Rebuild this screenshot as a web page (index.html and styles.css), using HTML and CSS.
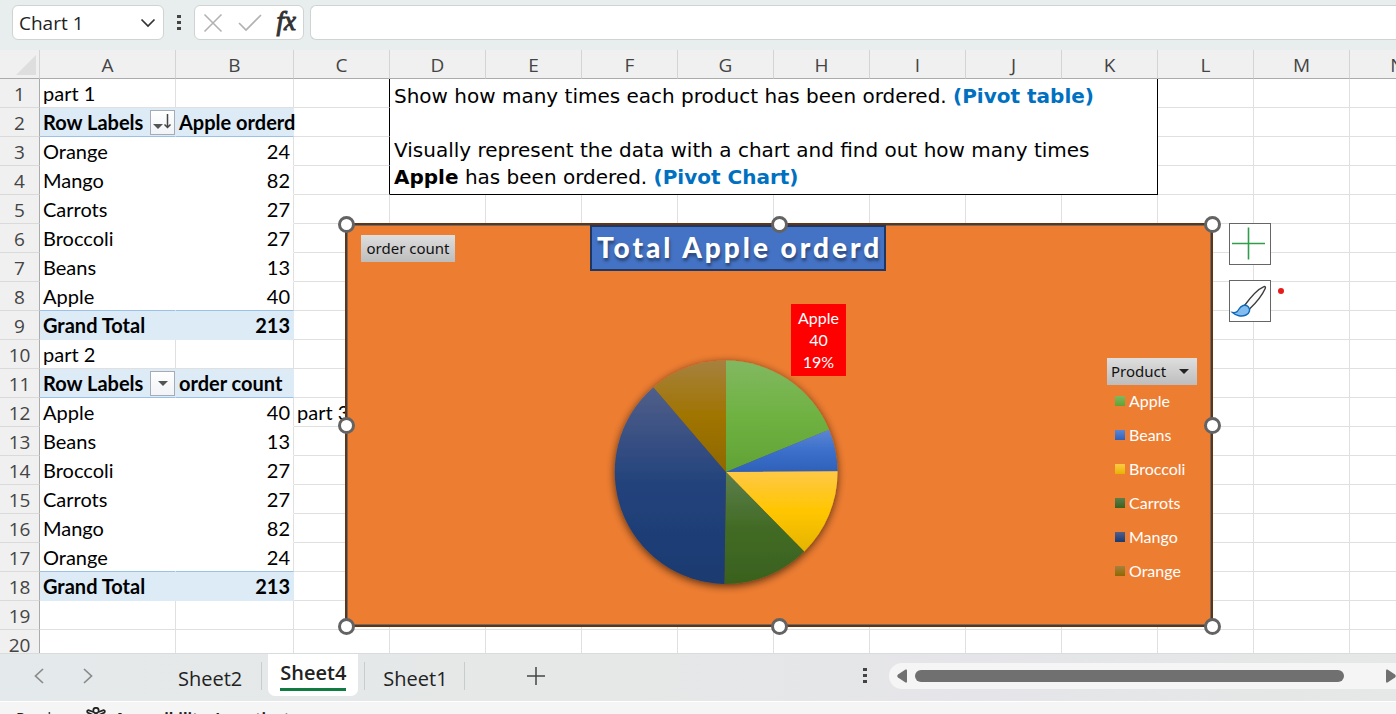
FILE: index.html
```html
<!DOCTYPE html>
<html lang="en">
<head>
<meta charset="utf-8">
<title>Sheet4</title>
<link rel="stylesheet" href="styles.css">
</head>
<body>
<header class="formula-bar">
  <button class="name-box" type="button">Chart 1
    <svg width="16" height="10" viewBox="0 0 16 10"><path d="M1.500 1.500 8 8l6.500-6.500" fill="none" stroke="#333" stroke-width="1.700"/></svg>
  </button>
  <svg class="dots" width="4" height="16" viewBox="0 0 4 16"><path d="M0 0h4v3H0zM0 6h4v3H0zM0 12h4v3H0z" fill="#444"/></svg>
  <div class="formula-tools">
    <button type="button" aria-label="Cancel"><svg width="20" height="20" viewBox="0 0 20 20"><path d="M1.500 1.500 18.500 18.500M18.500 1.500 1.500 18.500" stroke="#b2b2b2" stroke-width="1.600"/></svg></button>
    <button type="button" aria-label="Enter"><svg width="24" height="18" viewBox="0 0 24 18"><path d="m1 9 7 7L23 1" fill="none" stroke="#b2b2b2" stroke-width="1.700"/></svg></button>
    <button type="button" class="fx" aria-label="Insert function">fx</button>
  </div>
  <input class="formula-input" type="text" aria-label="Formula">
</header>

<main class="sheet">
  <table class="grid">
    <colgroup><col class="c-num"><col class="c-a"><col class="c-b"><col span="12" class="c-std"></colgroup>
    <thead>
      <tr><th class="corner"><svg width="20" height="20" viewBox="0 0 20 20"><path d="M20 0v20H0z" fill="#dedede"/></svg></th><th>A</th><th>B</th><th>C</th><th>D</th><th>E</th><th>F</th><th>G</th><th>H</th><th>I</th><th>J</th><th>K</th><th>L</th><th>M</th><th>N</th></tr>
    </thead>
    <tbody>
      <tr><th>1</th><td>part 1</td><td></td><td class="edge"></td>
        <td class="note" colspan="8" rowspan="4">Show how many times each product has been ordered. <b class="blue">(Pivot table)</b><br><br>Visually represent the data with a chart and find out how many times<br><b>Apple</b> has been ordered. <b class="blue">(Pivot Chart)</b></td>
        <td class="rest" colspan="3"></td></tr>
      <tr class="band"><th>2</th><td><div class="field">Row Labels<button type="button" aria-label="Sort and filter"><svg width="19" height="19" viewBox="0 0 19 19"><path d="M0 11h10l-5 5z" fill="#555"/><path d="M14.500 1v13M11.500 11.500l3 3 3-3" fill="none" stroke="#444" stroke-width="1.500"/></svg></button></div></td><td>Apple orderd</td><td class="edge"></td><td class="rest" colspan="3"></td></tr>
      <tr class="item"><th>3</th><td>Orange</td><td>24</td><td class="edge"></td><td class="rest" colspan="3"></td></tr>
      <tr class="item"><th>4</th><td>Mango</td><td>82</td><td class="edge"></td><td class="rest" colspan="3"></td></tr>
      <tr class="item"><th>5</th><td>Carrots</td><td>27</td><td></td><td class="rest" colspan="11"></td></tr>
      <tr class="item"><th>6</th><td>Broccoli</td><td>27</td><td></td><td class="rest" colspan="11"></td></tr>
      <tr class="item"><th>7</th><td>Beans</td><td>13</td><td></td><td class="rest" colspan="11"></td></tr>
      <tr class="item last"><th>8</th><td>Apple</td><td>40</td><td></td><td class="rest" colspan="11"></td></tr>
      <tr class="band total"><th>9</th><td>Grand Total</td><td>213</td><td></td><td class="rest" colspan="11"></td></tr>
      <tr><th>10</th><td>part 2</td><td></td><td></td><td class="rest" colspan="11"></td></tr>
      <tr class="band"><th>11</th><td><div class="field">Row Labels<button type="button" aria-label="Filter"><svg width="19" height="19" viewBox="0 0 19 19"><path d="M5 7h10l-5 5z" fill="#555"/></svg></button></div></td><td>order count</td><td></td><td class="rest" colspan="11"></td></tr>
      <tr class="item"><th>12</th><td>Apple</td><td>40</td><td>part 3</td><td class="rest" colspan="11"></td></tr>
      <tr class="item"><th>13</th><td>Beans</td><td>13</td><td></td><td class="rest" colspan="11"></td></tr>
      <tr class="item"><th>14</th><td>Broccoli</td><td>27</td><td></td><td class="rest" colspan="11"></td></tr>
      <tr class="item"><th>15</th><td>Carrots</td><td>27</td><td></td><td class="rest" colspan="11"></td></tr>
      <tr class="item"><th>16</th><td>Mango</td><td>82</td><td></td><td class="rest" colspan="11"></td></tr>
      <tr class="item last"><th>17</th><td>Orange</td><td>24</td><td></td><td class="rest" colspan="11"></td></tr>
      <tr class="band total"><th>18</th><td>Grand Total</td><td>213</td><td></td><td class="rest" colspan="11"></td></tr>
      <tr><th>19</th><td></td><td></td><td></td><td class="rest" colspan="11"></td></tr>
      <tr><th>20</th><td></td><td></td><td></td><td class="rest" colspan="11"></td></tr>
    </tbody>
  </table>

  <section class="chart" aria-label="Total Apple orderd">
    <button type="button" class="pivot-button count">order count</button>
    <h1 class="chart-title">Total Apple orderd</h1>
    <svg class="pie" width="252" height="252" viewBox="-126 -126 252 252">
      <defs>
        <linearGradient id="g1" x2="0" y2="1"><stop offset="0" stop-color="#81b861"/><stop offset=".5" stop-color="#6fb242"/><stop offset="1" stop-color="#61a235"/></linearGradient>
        <linearGradient id="g2" x2="0" y2="1"><stop offset="0" stop-color="#5d86d2"/><stop offset=".5" stop-color="#3b6fcb"/><stop offset="1" stop-color="#2e61b9"/></linearGradient>
        <linearGradient id="g3" x2="0" y2="1"><stop offset="0" stop-color="#ffc846"/><stop offset=".5" stop-color="#ffc600"/><stop offset="1" stop-color="#e5b400"/></linearGradient>
        <linearGradient id="g4" x2="0" y2="1"><stop offset="0" stop-color="#5c7e4c"/><stop offset=".5" stop-color="#426b25"/><stop offset="1" stop-color="#3a611e"/></linearGradient>
        <linearGradient id="g5" x2="0" y2="1"><stop offset="0" stop-color="#505f8a"/><stop offset=".5" stop-color="#22427c"/><stop offset="1" stop-color="#1b3a70"/></linearGradient>
        <linearGradient id="g6" x2="0" y2="1"><stop offset="0" stop-color="#a6813f"/><stop offset=".5" stop-color="#a07400"/><stop offset="1" stop-color="#8e6800"/></linearGradient>
        <filter id="sh" x="-20%" y="-20%" width="140%" height="140%"><feDropShadow dx="0" dy="2" stdDeviation="4" flood-color="#000" flood-opacity=".65"/></filter>
      </defs>
      <g filter="url(#sh)">
        <path d="M0 0V-111.500A112 112 0 0 1 103-42.300z" fill="url(#g1)"/>
        <path d="M0 0 103-42.300A112 112 0 0 1 111.500-.8z" fill="url(#g2)"/>
        <path d="M0 0 111.500-.8A112 112 0 0 1 78.200 79.500z" fill="url(#g3)"/>
        <path d="M0 0 78.200 79.500A112 112 0 0 1-1.600 112z" fill="url(#g4)"/>
        <path d="M0 0-1.600 112A112 112 0 0 1-72.500-84.700z" fill="url(#g5)"/>
        <path d="M0 0-72.500-84.700A112 112 0 0 1 0-111.500z" fill="url(#g6)"/>
      </g>
    </svg>
    <div class="data-label">Apple<br>40<br>19%</div>
    <div class="legend">
      <button type="button" class="pivot-button">Product<svg width="10" height="5" viewBox="0 0 10 5"><path d="M0 0h10L5 5z" fill="#222"/></svg></button>
      <ul>
        <li class="k1">Apple</li><li class="k2">Beans</li><li class="k3">Broccoli</li><li class="k4">Carrots</li><li class="k5">Mango</li><li class="k6">Orange</li>
      </ul>
    </div>
    <i class="handle n w"></i><i class="handle n m"></i><i class="handle n e"></i>
    <i class="handle c w"></i><i class="handle c e"></i>
    <i class="handle s w"></i><i class="handle s m"></i><i class="handle s e"></i>
  </section>

  <div class="chart-tools">
    <button type="button" aria-label="Chart elements"><svg width="40" height="40" viewBox="0 0 40 40"><path d="M2 19.500h33M18.500 3.500v32" stroke="#2f9e4b" stroke-width="1.600"/></svg></button>
    <button type="button" aria-label="Chart styles"><svg width="40" height="40" viewBox="0 0 40 40"><path d="M14.500 24.500C20 17 28 8 33.500 5.800c2-.8 2.300.6 1.600 2C32 14.500 26 22 19.500 28z" fill="#fafafa" stroke="#3b3b3b" stroke-width="1.400"/><path d="M2.500 31.500c4 .5 5-1 6.500-3.500 2-3.500 6-5 9-2.500 3 3 1.500 7-2 8.500-4.500 2-10 .8-13.500-2.500z" fill="#83bdf0" stroke="#1068b8" stroke-width="1.400"/></svg></button>
    <i class="badge"></i>
  </div>
</main>

<nav class="tabs">
  <button type="button" class="step" aria-label="Previous sheet"><svg width="10" height="16" viewBox="0 0 10 16"><path d="M9 1 1.500 8 9 15" fill="none" stroke="#8a8a8a" stroke-width="1.700"/></svg></button>
  <button type="button" class="step" aria-label="Next sheet"><svg width="10" height="16" viewBox="0 0 10 16"><path d="m1 1 7.500 7L1 15" fill="none" stroke="#8a8a8a" stroke-width="1.700"/></svg></button>
  <button type="button" class="tab first">Sheet2</button>
  <button type="button" class="tab active"><span>Sheet4</span></button>
  <button type="button" class="tab last">Sheet1</button>
  <button type="button" class="add" aria-label="New sheet"><svg width="18" height="18" viewBox="0 0 18 18"><path d="M0 9h18M9 0v18" stroke="#444" stroke-width="1.500"/></svg></button>
  <svg class="dots" width="4" height="16" viewBox="0 0 4 16"><path d="M0 0h4v3H0zM0 6h4v3H0zM0 12h4v3H0z" fill="#444"/></svg>
  <div class="scroll">
    <svg width="10" height="14" viewBox="0 0 10 14"><path d="M10 1.500v11Q10 14 8.500 13.500L1 8.500Q-.5 7 1 5.500L8.500.5Q10 0 10 1.500" fill="#707070"/></svg>
    <span class="thumb"></span>
    <svg width="10" height="14" viewBox="0 0 10 14"><path d="M0 1.500v11Q0 14 1.500 13.500L9 8.500Q10.500 7 9 5.500L1.500.5Q0 0 0 1.500" fill="#707070"/></svg>
  </div>
</nav>
<footer class="status"><span>Ready</span>
  <svg width="20" height="20" viewBox="0 0 20 20" fill="none" stroke="#222" stroke-width="1.700"><circle cx="10" cy="3.500" r="2.700"/><path d="M7.500 5 2.500 3.200Q.5 3.500 1.500 5.500L7 8v4l-2 6M12.500 5l5-1.800q2 .3 1 2.300L13 8v4l2 6"/></svg>
  <b>Accessibility: Investigate</b></footer>
</body>
</html>
```
FILE: styles.css
```css
* { box-sizing: border-box; }
body {
  margin: 0;
  height: 100vh;
  display: flex;
  flex-direction: column;
  overflow: hidden;
  background: #f5f5f5;
  font-family: "Open Sans", "Noto Sans", sans-serif;
  color: #222;
}
button { font: inherit; color: inherit; padding: 0; border: 0; background: none; }
svg { display: block; flex: none; }

.formula-bar {
  flex: none;
  height: 50px;
  padding: 5px 0 10px 12px;
  display: flex;
  align-items: center;
  background: #e8eeed;
}
.name-box, .formula-tools, .formula-input {
  height: 35px;
  background: #fff;
  border: 1px solid #cfd3d2;
  border-radius: 6px;
}
.name-box {
  width: 152px;
  padding: 0 7px 0 6px;
  display: flex;
  align-items: center;
  justify-content: space-between;
  font-size: 19px;
}
.formula-bar .dots { margin: 0 13px; }
.formula-tools {
  width: 110px;
  padding: 0 7px 0 8px;
  display: flex;
  align-items: center;
  justify-content: space-between;
}
.fx { padding-bottom: 3px; font: italic 27px/27px "Liberation Serif", serif; color: #333; -webkit-text-stroke: 1px #333; }
.formula-input { flex: 1; min-width: 0; margin-left: 6px; border-right: 0; border-radius: 6px 0 0 6px; }

.sheet { flex: 1; min-height: 0; position: relative; overflow: hidden; background: #fff; }
.grid { table-layout: fixed; width: 1446px; border-spacing: 0; font: 20px/27px Lato, sans-serif; color: #000; }
.c-num { width: 40px; }
.c-a { width: 136px; }
.c-b { width: 118px; }
.c-std { width: 96px; }
.grid tr { height: 29px; }
.grid th {
  padding: 2px 0 0;
  height: 29px;
  font: 19px/26px "Open Sans", sans-serif;
  color: #444;
  background: #f0f0f0;
}
.grid thead th { border-bottom: 1px solid #ababab; border-right: 1px solid #d4d4d4; }
.grid tbody th { border-right: 1px solid #ababab; border-bottom: 1px solid #dadada; }
.grid .corner svg { margin-left: 16px; }
.grid td {
  height: 29px;
  padding: 0 3px;
  white-space: nowrap;
  border-right: 1px solid #e0e0e0;
  border-bottom: 1px solid #e0e0e0;
}
.grid .item td:nth-child(-n+3) { border-bottom-color: #fff; }
.grid .item td:nth-child(2) { border-right-color: #fff; }
.grid .item td:nth-child(3), .grid .total td:nth-child(3) { text-align: right; }
.grid .band td:nth-child(-n+3) {
  background: #ddebf7;
  border-color: #ddebf7;
  border-bottom-color: #9bc2e6;
  font-weight: bold;
}
.grid .total td:nth-child(-n+3) { border-bottom-color: #ddebf7; }
.grid .last td:nth-child(-n+3) { border-bottom-color: #9bc2e6; }
.grid td.edge { border-right-color: #000; }
.grid td.note {
  padding: 4px 4px 0;
  vertical-align: top;
  font: 20px/27px "DejaVu Sans", sans-serif;
  border-right-color: #000;
  border-bottom-color: #000;
}
.blue { color: #0070c0; }
.grid td.rest { background: repeating-linear-gradient(90deg, transparent 0 95px, #e0e0e0 95px 96px); }
.field { display: flex; align-items: center; justify-content: space-between; margin-right: -3px; }
.field button { width: 25px; height: 25px; display: grid; place-items: center; border: 1px solid #a5acb5; background: linear-gradient(#fff, #f1f3f7); }

.chart {
  position: absolute;
  left: 345px;
  top: 173px;
  width: 868px;
  height: 404px;
  background: #ed7d31;
  border: 2px solid #663311;
  outline: 1px solid #6b6b6b;
  outline-offset: -3px;
}
.pivot-button {
  height: 27px;
  padding: 0 4px;
  background: linear-gradient(#dedede, #bdbdbd);
  font: 15px/27px "Noto Sans", sans-serif;
  color: #111;
  white-space: nowrap;
}
.count { position: absolute; left: 14px; top: 10px; width: 94px; }
.chart-title {
  position: absolute;
  left: 243px;
  top: 0;
  width: 296px;
  height: 46px;
  margin: 0;
  padding-left: 5px;
  border: 2px solid #1f3763;
  background: #4472c4;
  color: #fff;
  font: 900 28px/40px Lato, sans-serif;
  letter-spacing: 3px;
  white-space: nowrap;
  text-shadow: 1px 3px 3px rgba(0, 0, 0, .4);
}
.pie { position: absolute; left: 253px; top: 121px; }
.data-label {
  position: absolute;
  left: 444px;
  top: 79px;
  width: 55px;
  padding: 3px 0;
  background: #f00;
  color: #fff;
  font: 16px/22px Lato, sans-serif;
  text-align: center;
}
.legend { position: absolute; left: 760px; top: 133px; width: 90px; }
.legend .pivot-button { width: 100%; display: flex; align-items: center; justify-content: space-between; padding-right: 8px; }
.legend ul { margin: -1px 0 0; padding: 0 0 0 8px; list-style: none; color: #fff; font: 16px/34px Lato, sans-serif; }
.legend li { display: flex; align-items: center; gap: 4px; }
.legend li::before { content: ""; width: 10px; height: 10px; }
.legend .k1::before { background: linear-gradient(#7fb85c, #61a235); }
.legend .k2::before { background: linear-gradient(#5d86d2, #2e61b9); }
.legend .k3::before { background: linear-gradient(#ffc846, #e5b400); }
.legend .k4::before { background: linear-gradient(#5c7e4c, #3a611e); }
.legend .k5::before { background: linear-gradient(#505f8a, #1b3a70); }
.legend .k6::before { background: linear-gradient(#a6813f, #8e6800); }
.handle { position: absolute; width: 17px; height: 17px; margin: -9px; border: 3px solid #636363; border-radius: 50%; background: #fff; }
.n { top: 0; }
.c { top: calc(50% + 1px); }
.s { top: calc(100% + 2px); }
.w { left: 0; }
.m { left: calc(50% + 1px); }
.e { left: calc(100% + 2px); }

.chart-tools { position: absolute; left: 1229px; top: 173px; display: grid; gap: 15px; }
.chart-tools button { width: 42px; height: 42px; border: 1px solid #666; background: #fff; }
.badge { position: absolute; left: 49px; top: 65px; width: 6px; height: 6px; border-radius: 50%; background: #e81b1b; }

.tabs {
  flex: none;
  height: 49px;
  padding: 0 0 4px 34px;
  display: flex;
  align-items: center;
  border-top: 1px solid #d8dcdd;
  border-bottom: 1px solid #fff;
  background: linear-gradient(90deg, #e4e9eb, #e6e8e7 40%, #e5e5e9 70%, #e5e8e6);
  font-size: 20px;
}
.step { width: 10px; margin-right: 39px; }
.tab { height: 28px; padding-top: 4px; line-height: 26px; border-right: 1px solid #c8cccd; }
.tab.first { margin-left: 46px; padding-right: 19px; }
.tab.last { margin-left: 6px; padding-left: 18px; padding-right: 16px; border-left: 1px solid #c8cccd; }
.tab.active {
  align-self: flex-start;
  height: 42px;
  margin-left: 6px;
  padding: 0 12px;
  border: 0;
  border-radius: 0 0 7px 7px;
  background: #fff;
  font-weight: 600;
}
.tab.active span { display: block; height: 32px; padding-top: 1px; border-bottom: 3px solid #107c41; }
.add { margin: 0 auto 0 62px; }
.scroll {
  flex: 0 0 507px;
  height: 26px;
  margin-left: 22px;
  padding-left: 8px;
  display: flex;
  align-items: center;
  border-radius: 13px 0 0 13px;
  background: #f5f5f5;
}
.thumb { flex: 1; height: 12px; margin: 0 42px 0 8px; border-radius: 6px; background: #707070; }
.status { flex: none; height: 12px; padding: 5px 0 0 16px; display: flex; align-items: flex-start; overflow: hidden; font-size: 15px; line-height: 20px; white-space: nowrap; }
.status svg { margin: 0 9px 0 27px; }
```
